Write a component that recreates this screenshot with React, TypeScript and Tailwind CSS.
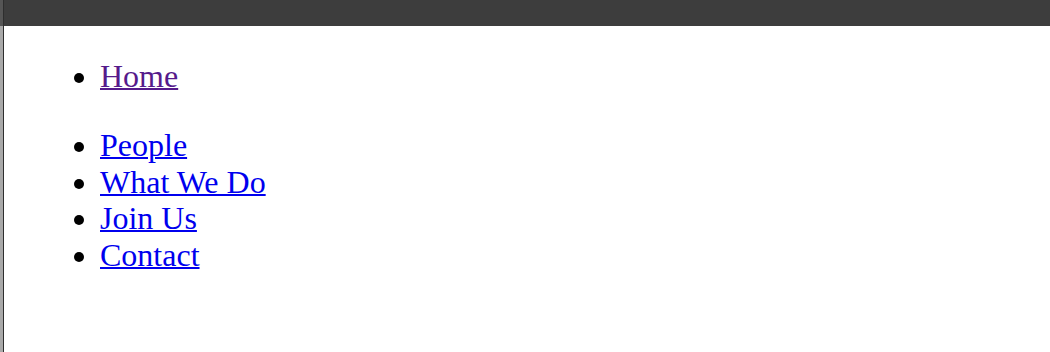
const serif = { fontFamily: '"Liberation Serif", "Times New Roman", serif' };

const primaryLinks = [{ label: "Home", visited: true }];
const secondaryLinks = ["People", "What We Do", "Join Us", "Contact"];

function NavList({ items }: { items: { label: string; visited?: boolean }[] }) {
  return (
    <ul className="my-8 list-disc pl-20">
      {items.map((item) => (
        <li key={item.label}>
          <a
            className={
              item.visited
                ? "text-[#551a8b] underline decoration-2"
                : "text-[#0000ee] underline decoration-2"
            }
            href="#"
          >
            {item.label}
          </a>
        </li>
      ))}
    </ul>
  );
}

export default function App() {
  return (
    <div className="flex min-h-[352px] bg-white text-black" style={serif}>
      <div className="flex w-[3px] flex-col">
        <div className="h-[26px] bg-[#555555]" />
        <div className="flex-1 bg-[#a9a9a9]" />
      </div>
      <div className="w-px bg-[#2e2e2e]" />
      <div className="flex flex-1 flex-col">
        <div className="h-[26px] bg-[#3d3d3d]" />
        <div className="px-4 text-[32px] leading-[36.8px]">
          <NavList items={primaryLinks} />
          <NavList items={secondaryLinks.map((label) => ({ label }))} />
        </div>
      </div>
    </div>
  );
}
